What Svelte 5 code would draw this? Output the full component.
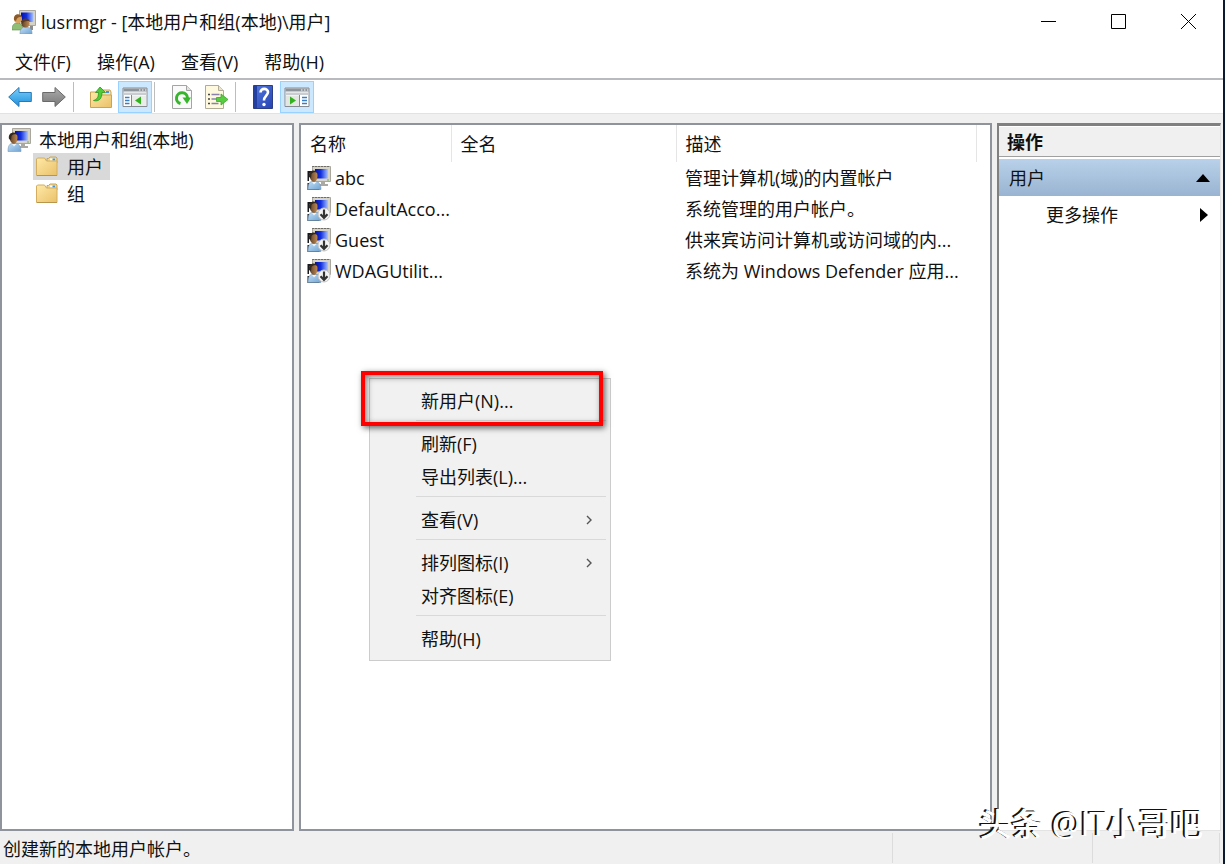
<script lang="ts">
	type User = { name: string; fullName: string; description: string; disabled: boolean };
	type MenuEntry = { label: string; submenu?: boolean } | null;

	const menus = ['文件(F)', '操作(A)', '查看(V)', '帮助(H)'];

	const folders = ['用户', '组'];
	let selectedFolder = $state('用户');

	const users: User[] = [
		{ name: 'abc', fullName: '', description: '管理计算机(域)的内置帐户', disabled: false },
		{ name: 'DefaultAcco...', fullName: '', description: '系统管理的用户帐户。', disabled: true },
		{ name: 'Guest', fullName: '', description: '供来宾访问计算机或访问域的内...', disabled: true },
		{ name: 'WDAGUtilit...', fullName: '', description: '系统为 Windows Defender 应用...', disabled: true }
	];

	// null is a separator
	const contextMenu: MenuEntry[] = [
		{ label: '新用户(N)...' },
		null,
		{ label: '刷新(F)' },
		{ label: '导出列表(L)...' },
		null,
		{ label: '查看(V)', submenu: true },
		null,
		{ label: '排列图标(I)', submenu: true },
		{ label: '对齐图标(E)' },
		null,
		{ label: '帮助(H)' }
	];
</script>

<svelte:head>
	<title>lusrmgr</title>
</svelte:head>

<svg class="defs" width="0" height="0" aria-hidden="true">
	<defs>
		<linearGradient id="screen" x1="0" y1="0" x2="1" y2="0">
			<stop offset="0" stop-color="#0410a8" />
			<stop offset=".45" stop-color="#1230e0" />
			<stop offset="1" stop-color="#a9c4ff" />
		</linearGradient>
		<linearGradient id="shirt" x1="0" y1="0" x2="1" y2="1">
			<stop offset="0" stop-color="#c4e0f6" />
			<stop offset="1" stop-color="#6ea3d3" />
		</linearGradient>
		<linearGradient id="face" x1="0" y1="0" x2="1" y2="0">
			<stop offset="0" stop-color="#5d4029" />
			<stop offset="1" stop-color="#c08a52" />
		</linearGradient>
		<linearGradient id="folder" x1="0" y1="0" x2="1" y2="1">
			<stop offset="0" stop-color="#ffe9a8" />
			<stop offset="1" stop-color="#e9c169" />
		</linearGradient>
		<linearGradient id="blueArrow" x1="0" y1="0" x2="0" y2="1">
			<stop offset="0" stop-color="#7fd0fa" />
			<stop offset="1" stop-color="#1b8fdc" />
		</linearGradient>
		<linearGradient id="greyArrow" x1="0" y1="0" x2="0" y2="1">
			<stop offset="0" stop-color="#adadad" />
			<stop offset="1" stop-color="#777" />
		</linearGradient>
		<linearGradient id="book" x1="0" y1="0" x2="1" y2="1">
			<stop offset="0" stop-color="#5578de" />
			<stop offset="1" stop-color="#2444b4" />
		</linearGradient>
	</defs>
</svg>

{#snippet userIcon(disabled: boolean, outlined: boolean)}
	<svg class="icon" viewBox="0 0 24 24" aria-hidden="true">
		<path d="M5.500.5h18v15h-18z" fill="#d6d3c8" stroke="#a9a79e" />
		<path d="M8 3h13v9.500H8z" fill="url(#screen)" />
		<path d="M14 16h4v2h3v2h-9v-2h2z" fill="#aaa9a3" />
		<circle cx="21" cy="14" r=".7" fill="#49a53e" />
		{#if outlined}
			<path d="M5.500.5h18" stroke="#333" stroke-dasharray="1 2" />
			<path d="M.5 5h5v2H2v8H.5zM.5 17h2v6h10v1H.5z" fill="#15181d" />
		{/if}
		<path d="M1 23.500c0-5 1-8.500 6-8.500s7 3.500 7 8.500z" fill="url(#shirt)" stroke="#7897b3" stroke-width=".6" />
		<path d="M2.500 9c0-5 8-5 8 0 0 4-1.500 7-3.500 7s-4.500-3-4.500-7z" fill="url(#face)" />
		<path d="M2 11C.5 3.500 9 3 10.500 6.500 7 6 5.500 6.500 4.500 8L4 12z" fill="#35291f" />
		<path d="M5 16l2 2.500L9.500 16z" fill="#eef6fc" />
		{#if disabled}
			<circle cx="17" cy="17" r="6" fill="#f4f4f4" stroke="#c4c4c4" />
			<path d="M17 12.500v8M13.500 17.200l3.500 3.600 3.500-3.600" fill="none" stroke="#333" stroke-width="2.200" />
		{/if}
	</svg>
{/snippet}

{#snippet folderIcon()}
	<svg class="icon" viewBox="0 0 24 24" aria-hidden="true">
		<path d="M12 5V3.500h1.500L15 2h6l1 1v5H12z" fill="#f3d78d" stroke="#c7a458" />
		<path d="M15 3.500h5v2h-5z" fill="#fff" />
		<path d="M17.500 3.500h2.500v2h-2.500z" fill="#3e93da" />
		<path d="M1.500 5V4l1-1h7l2 3h10.500v14.500H1.500z" fill="url(#folder)" stroke="#d3ae5f" />
		<path d="M2 20.500h20" stroke="#b8954c" />
	</svg>
{/snippet}

{#snippet consoleIcon(flip: boolean)}
	<svg class="icon" viewBox="0 0 26 24" aria-hidden="true">
		<path d="M1 3h24v18.500H1z" fill="#fff" stroke="#868b91" />
		<path d="M1.500 3.500h23v3h-23z" fill="#8c939b" />
		<path d="M17 5h1.500m1.500 0h1.500m1.500 0h1" stroke="#fff" />
		<path d="M1.500 7.500h23v2.500h-23z" fill="#c9ccd0" />
		{#if flip}
			<path d="M2 10.500h13v10.500H2z" fill="#e3e6e3" />
			<path d="M15.500 10v11" stroke="#868b91" />
			<path d="M18 12.500h5M18 15.500h5M18 18.500h5" stroke="#397fc5" stroke-width="1.400" />
			<path d="M6 11.500v8l6-4z" fill="#31b21e" />
		{:else}
			<path d="M10 10.500h14v10.500H10z" fill="#e9ece9" />
			<path d="M9.500 10v11" stroke="#868b91" />
			<path d="M3 12.500h4.500M3 15.500h4.500M3 18.500h4.500" stroke="#397fc5" stroke-width="1.400" />
			<path d="M19 11.500v8l-6-4z" fill="#31b21e" />
		{/if}
	</svg>
{/snippet}

<div class="window">
	<header class="titlebar">
		<svg class="icon" viewBox="0 0 24 24" aria-hidden="true">
			<path d="M7.500.5h16v15h-16z" fill="#d6d3c8" stroke="#a9a79e" />
			<path d="M9 2.500h12.500V12H9z" fill="url(#screen)" />
			<path d="M18 16h3v4h-3z" fill="#8d8c88" />
			<path d="M0 20c0-5 2-7 5-7s6 2 6 7z" fill="#8fbe74" stroke="#638f50" stroke-width=".6" />
			<circle cx="6" cy="9" r="4" fill="#d8a15e" />
			<path d="M2 10c-1-7 7-7 8-3-3 0-5 0-6 4z" fill="#8c5a28" />
			<path d="M8 24c0-5 2-7 6-7s6 2 6 7z" fill="url(#shirt)" stroke="#7897b3" stroke-width=".6" />
			<circle cx="13.500" cy="13.500" r="4" fill="url(#face)" />
			<path d="M9.500 14c-1-6 6.500-7 8-3-3 0-5 0-6.500 2z" fill="#5a3b22" />
		</svg>
		<h1>lusrmgr - [本地用户和组(本地)\用户]</h1>
		<div class="controls">
			<button aria-label="最小化">
				<svg viewBox="0 0 15 15"><path d="M0 7.500h15" /></svg>
			</button>
			<button aria-label="最大化">
				<svg viewBox="0 0 15 15"><path d="M.5.5h14v14H.5z" /></svg>
			</button>
			<button aria-label="关闭">
				<svg viewBox="0 0 15 15"><path d="M0 0l15 15M15 0L0 15" /></svg>
			</button>
		</div>
	</header>

	<nav class="menubar">
		{#each menus as menu}
			<button>{menu}</button>
		{/each}
	</nav>

	<div class="toolbar">
		<button aria-label="后退">
			<svg class="icon" viewBox="0 0 24 24">
				<path d="M.7 12L11 2.500v5h12.300v9H11v5z" fill="url(#blueArrow)" stroke="#2a78b4" />
			</svg>
		</button>
		<button aria-label="前进">
			<svg class="icon" viewBox="0 0 24 24">
				<path d="M23.300 12L13 2.500v5H.7v9H13v5z" fill="url(#greyArrow)" stroke="#6a6a6a" />
			</svg>
		</button>
		<span class="divider"></span>
		<button aria-label="上一级">
			<svg class="icon" viewBox="0 0 24 24">
				<path d="M12 5h9l1 2v4H12z" fill="#f7e3a8" stroke="#c7a458" />
				<path d="M17 6h3v2h-3z" fill="#3e93da" />
				<path d="M1.500 7h8l2 3h11v12.500h-21z" fill="url(#folder)" stroke="#cba453" />
				<path d="M4.500 15.500c4-1 5-4 5-8H6.500L11 2l5.500 5.500h-3.500c0 6-3 9.500-8.500 8z" fill="#4fcc37" stroke="#2f9620" stroke-width=".8" />
			</svg>
		</button>
		<button class="on" aria-label="显示/隐藏控制台树" aria-pressed="true">{@render consoleIcon(false)}</button>
		<span class="divider"></span>
		<button aria-label="刷新">
			<svg class="icon" viewBox="0 0 24 24">
				<path d="M2.500.5h14l5 5v18h-19z" fill="#fafafa" stroke="#a4a4a4" />
				<path d="M16.500.5v5h5" fill="#e2e2e2" stroke="#a4a4a4" />
				<path d="M10.500 18.500A5.500 5.500 0 1 1 17.500 13" fill="none" stroke="#37b52c" stroke-width="3" />
				<path d="M21 12.500h-8.500l4.500 6.500z" fill="#37b52c" />
			</svg>
		</button>
		<button aria-label="导出列表">
			<svg class="icon" viewBox="0 0 24 24">
				<path d="M1.500.5h13l5 5v18h-18z" fill="#fdf8de" stroke="#b0ab97" />
				<path d="M14.500.5v5h5" fill="#e9e3c8" stroke="#b0ab97" />
				<path d="M4 9.500h2M4 14h2M4 18.500h2" stroke="#444" stroke-width="1.400" />
				<path d="M7.500 9.500h8M7.500 14h5M7.500 18.500h7" stroke="#8a82ad" stroke-width="1.400" />
				<path d="M12.500 12.500H17v-3.500l7 5.500-7 5.500v-3.500h-4.500z" fill="#58cd42" stroke="#3ba52c" stroke-width=".8" />
			</svg>
		</button>
		<span class="divider"></span>
		<button aria-label="帮助">
			<svg class="icon" viewBox="0 0 24 24">
				<path d="M2.500.5h19v23h-19z" fill="url(#book)" stroke="#2c3f86" />
				<path d="M3 1h3v22H3z" fill="#2340a0" />
				<path d="M9.500 7.500C9.500 2.500 17 3 17 7c0 3.500-4 4-4 8.500" fill="none" stroke="#fff" stroke-width="2.600" />
				<circle cx="13" cy="19.500" r="1.700" fill="#fff" />
			</svg>
		</button>
		<button class="on" aria-label="显示/隐藏操作窗格" aria-pressed="true">{@render consoleIcon(true)}</button>
	</div>

	<main class="panes">
		<section class="pane tree">
			<button class="root">
				{@render userIcon(false, false)}
				<span>本地用户和组(本地)</span>
			</button>
			{#each folders as folder}
				<button
					class="leaf"
					class:selected={folder === selectedFolder}
					onclick={() => (selectedFolder = folder)}
				>
					{@render folderIcon()}
					<span>{folder}</span>
				</button>
			{/each}
		</section>

		<section class="pane list">
			<table>
				<colgroup>
					<col class="col-name" />
					<col class="col-full" />
					<col class="col-desc" />
				</colgroup>
				<thead>
					<tr>
						<th>名称</th>
						<th>全名</th>
						<th>描述</th>
					</tr>
				</thead>
				<tbody>
					{#each users as user}
						<tr>
							<td class="name">
								<div>
									{@render userIcon(user.disabled, true)}
									<span>{user.name}</span>
								</div>
							</td>
							<td>{user.fullName}</td>
							<td>{user.description}</td>
						</tr>
					{/each}
				</tbody>
			</table>

			<div class="context-menu" role="menu">
				{#each contextMenu as entry}
					{#if entry}
						<button role="menuitem">
							<span>{entry.label}</span>
							{#if entry.submenu}
								<svg viewBox="0 0 6 10" aria-hidden="true"><path d="M1 1l4 4-4 4" /></svg>
							{/if}
						</button>
					{:else}
						<hr />
					{/if}
				{/each}
				<div class="highlight"></div>
			</div>
		</section>

		<aside class="actions">
			<h2>操作</h2>
			<button class="group">
				<span>用户</span>
				<svg viewBox="0 0 14 8" aria-hidden="true"><path d="M0 8l7-8 7 8z" /></svg>
			</button>
			<button class="more">
				<span>更多操作</span>
				<svg viewBox="0 0 8 14" aria-hidden="true"><path d="M0 0l8 7-8 7z" /></svg>
			</button>
		</aside>
	</main>

	<footer class="statusbar">
		<span class="message">创建新的本地用户帐户。</span>
		<span class="cell wide"></span>
		<span class="cell"></span>
	</footer>

	<div class="watermark">头条 @IT小哥吧</div>
</div>

<style>
	:global(body) {
		margin: 0;
		background: #0a1a30;
	}

	.defs {
		position: absolute;
	}

	.window {
		position: relative;
		display: flex;
		flex-direction: column;
		box-sizing: border-box;
		height: 100vh;
		margin-right: 2px;
		background: #f0f0f0;
		color: #111;
		font-family: 'Open Sans', 'Noto Sans CJK SC', sans-serif;
		font-size: 18px;
		line-height: 26px;
		overflow: hidden;
	}

	button {
		padding: 0;
		border: 0;
		background: none;
		color: inherit;
		font: inherit;
		text-align: left;
		white-space: nowrap;
	}

	.icon {
		flex: none;
		display: block;
		width: 24px;
		height: 24px;
	}

	.titlebar {
		display: flex;
		align-items: center;
		height: 43px;
		padding-left: 12px;
		background: #fff;
	}

	.titlebar h1 {
		flex: 1;
		margin: 0 0 0 5px;
		font-size: 18px;
		font-weight: 400;
	}

	.controls {
		display: flex;
	}

	.controls button {
		display: flex;
		align-items: center;
		justify-content: center;
		width: 70px;
		height: 43px;
	}

	.controls svg {
		width: 15px;
		height: 15px;
		fill: none;
		stroke: #000;
	}

	.menubar {
		display: flex;
		gap: 26px;
		height: 35px;
		padding-left: 15px;
		background: #fff;
		border-bottom: 2px solid #b8babd;
	}

	.menubar button {
		padding-top: 2px;
	}

	.toolbar {
		display: flex;
		align-items: flex-end;
		height: 33px;
		padding-left: 3px;
		background: #fff;
		border-bottom: 1px solid #e2e2e2;
	}

	.toolbar button {
		display: flex;
		align-items: center;
		justify-content: center;
		box-sizing: border-box;
		width: 34px;
		height: 32px;
	}

	.toolbar .on {
		background: #cce8ff;
		border: 1px solid #99d1ff;
	}

	.toolbar .on .icon {
		width: 26px;
	}

	.divider {
		width: 1px;
		height: 30px;
		margin: 0 10px 1px 2px;
		background: #bdbdbd;
	}

	.panes {
		flex: 1;
		display: grid;
		grid-template-columns: 294px minmax(0, 1fr) 224px;
		gap: 5px;
		min-height: 0;
		padding: 9px 2px 0 0;
	}

	.pane {
		box-sizing: border-box;
		border: 2px solid #8e939c;
		background: #fff;
	}

	.tree {
		display: flex;
		flex-direction: column;
		align-items: flex-start;
		padding: 1px 0 0 5px;
	}

	.tree button {
		display: flex;
		align-items: center;
		height: 27px;
	}

	.root {
		gap: 8px;
	}

	.tree .leaf {
		gap: 8px;
		margin-left: 26px;
		padding: 0 7px 0 2px;
	}

	.tree .selected {
		background: #d9d9d9;
	}

	.list {
		position: relative;
	}

	table {
		border-collapse: collapse;
		table-layout: fixed;
		width: 675px;
	}

	.col-name {
		width: 150px;
	}

	.col-full {
		width: 225px;
	}

	.col-desc {
		width: 300px;
	}

	th,
	td {
		padding: 0 0 0 9px;
		text-align: left;
		font-weight: 400;
		white-space: nowrap;
	}

	th {
		height: 37px;
		border-right: 1px solid #e5e5e5;
	}

	td {
		height: 31px;
	}

	.name {
		padding-left: 6px;
	}

	.name div {
		display: flex;
		align-items: center;
		gap: 4px;
	}

	.context-menu {
		position: absolute;
		top: 253px;
		left: 68px;
		box-sizing: border-box;
		width: 242px;
		padding: 5px 4px;
		background: #f1f1f1;
		border: 1px solid #ccc;
	}

	.context-menu button {
		display: flex;
		align-items: center;
		justify-content: space-between;
		box-sizing: border-box;
		width: 100%;
		height: 33px;
		padding: 0 14px 0 47px;
	}

	.context-menu svg {
		width: 6px;
		height: 10px;
		fill: none;
		stroke: #555;
		stroke-width: 1.4;
	}

	hr {
		height: 1px;
		margin: 3px 0 6px 42px;
		border: 0;
		background: #d9d9d9;
	}

	.highlight {
		position: absolute;
		top: -8px;
		left: -9px;
		box-sizing: border-box;
		width: 242px;
		height: 55px;
		border: 4px solid #f00;
		box-shadow:
			2px 2px 6px rgba(0, 0, 0, 0.6),
			inset 2px 2px 6px rgba(0, 0, 0, 0.5);
		pointer-events: none;
	}

	.actions {
		display: flex;
		flex-direction: column;
		box-sizing: border-box;
		border: 2px solid #808080;
		border-top-width: 3px;
		border-right: 1px solid #e3e3e3;
		border-bottom: 1px solid #e3e3e3;
		background: #fff;
	}

	.actions h2 {
		height: 29px;
		margin: 1px 0 2px;
		padding-left: 8px;
		background: #f0f0f0;
		border-bottom: 1px solid #a0a0a0;
		font-size: 18px;
		font-weight: 700;
		line-height: 30px;
	}

	.actions button {
		display: flex;
		align-items: center;
		justify-content: space-between;
		height: 37px;
		padding-right: 10px;
	}

	.actions .group {
		padding-left: 10px;
		background: linear-gradient(#b9d1ea, #99b4d1);
	}

	.actions .more {
		padding-left: 47px;
		padding-right: 12px;
	}

	.group svg {
		width: 14px;
		height: 8px;
	}

	.more svg {
		width: 8px;
		height: 14px;
	}

	.statusbar {
		display: flex;
		align-items: center;
		height: 33px;
		padding: 0 3px;
	}

	.message {
		flex: 1;
		padding-top: 3px;
	}

	.cell {
		box-sizing: border-box;
		width: 128px;
		height: 30px;
		border-left: 1px solid #dcdcdc;
		border-right: 1px solid #dcdcdc;
	}

	.cell.wide {
		width: 200px;
		border-right: 0;
	}

	.watermark {
		position: absolute;
		right: 20px;
		bottom: 20px;
		color: #fff;
		font-size: 32px;
		font-weight: 500;
		line-height: 40px;
		text-shadow: -2px -1px 0 #111;
		white-space: nowrap;
		pointer-events: none;
	}
</style>
